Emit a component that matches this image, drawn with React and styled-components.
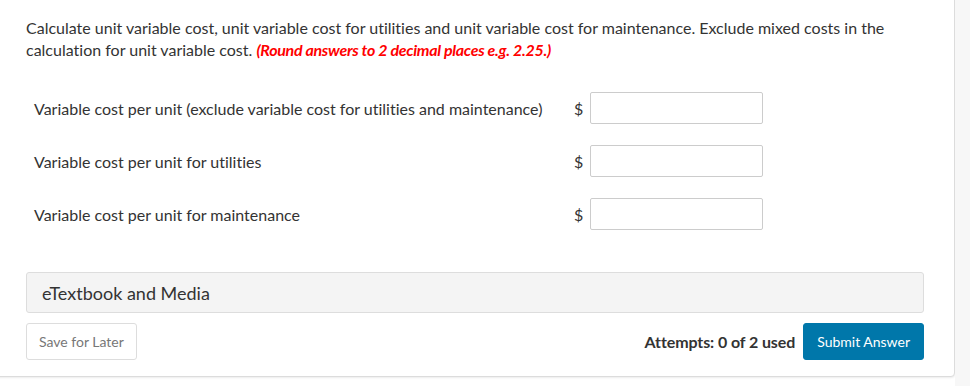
import React from 'react'
import styled, { createGlobalStyle } from 'styled-components'

//#region styles
const GlobalStyle = createGlobalStyle`
  html, body {
    margin: 0;
    padding: 0;
    background: #fff;
  }
  body {
    font-family: Lato, "Open Sans", sans-serif;
    font-variant-ligatures: none;
    color: #333;
  }
`
const Page = styled.div`
  display: flex;
  width: 970px;
  height: 386px;
  overflow: hidden;
`
const Main = styled.div`
  flex: 1;
`
const Gutter = styled.div`
  width: 15px;
  background: #f7f7f7;
`
const Card = styled.div`
  margin: -6px 0 0 -6px;
  padding: 22px 30px 16px 31px;
  background: #fff;
  border: 1px solid #dcdcdc;
  border-radius: 4px;
  box-shadow: 0 1px 2px rgba(0, 0, 0, 0.08);
`
const Prompt = styled.p`
  margin: 0;
  font-size: 16px;
  line-height: 22px;
  color: #333;

  > em {
    font-style: italic;
    font-weight: 700;
    color: #f00;
    letter-spacing: -0.3px;
  }
`
const Rows = styled.div`
  display: flex;
  flex-direction: column;
  gap: 21px;
  margin: 31px 0 0 8px;
`
const Row = styled.div`
  display: grid;
  grid-template-columns: 540px 16px 173px;
  align-items: center;
  font-size: 16px;
`
const Dollar = styled.span`
  font-size: 16px;
  color: #333;
`
const AnswerInput = styled.input`
  box-sizing: border-box;
  width: 173px;
  height: 32px;
  border: 1px solid #ccc;
  border-radius: 2px;
  background: #fff;
  outline: none;
`
const MediaPanel = styled.div`
  margin-top: 42px;
  height: 41px;
  box-sizing: border-box;
  display: flex;
  align-items: center;
  padding: 0 15px;
  background: #f4f4f4;
  border: 1px solid #ddd;
  border-radius: 3px;
  font-size: 18px;
  color: #333;
`
const Footer = styled.div`
  display: flex;
  align-items: center;
  margin-top: 10px;
`
const Button = styled.button`
  height: 37px;
  box-sizing: border-box;
  padding: 0 ${(p) => (p.$primary ? '13px' : '12px')};
  border-radius: 3px;
  font-family: Lato, sans-serif;
  font-variant-ligatures: none;
  font-size: 14px;
  border: 1px solid ${(p) => (p.$primary ? '#0077aa' : '#ddd')};
  background: ${(p) => (p.$primary ? '#0077aa' : '#fff')};
  color: ${(p) => (p.$primary ? '#fff' : '#777')};
`
const Attempts = styled.span`
  margin-left: auto;
  margin-right: 8px;
  font-size: 16px;
  font-weight: 700;
  letter-spacing: -0.1px;
  color: #333;
`
//#endregion

const rows = [
  'Variable cost per unit (exclude variable cost for utilities and maintenance)',
  'Variable cost per unit for utilities',
  'Variable cost per unit for maintenance',
]

function App() {
  return (
    <Page>
      <GlobalStyle />
      <Main>
        <Card>
          <Prompt>
            Calculate unit variable cost, unit variable cost for utilities and unit variable cost for
            maintenance. Exclude mixed costs in the calculation for unit variable cost.{' '}
            <em>(Round answers to 2 decimal places e.g. 2.25.)</em>
          </Prompt>
          <Rows>
            {rows.map((label) => (
              <Row key={label}>
                <span>{label}</span>
                <Dollar>$</Dollar>
                <AnswerInput type="text" />
              </Row>
            ))}
          </Rows>
          <MediaPanel>eTextbook and Media</MediaPanel>
          <Footer>
            <Button>Save for Later</Button>
            <Attempts>Attempts: 0 of 2 used</Attempts>
            <Button $primary>Submit Answer</Button>
          </Footer>
        </Card>
      </Main>
      <Gutter />
    </Page>
  )
}

export default App
